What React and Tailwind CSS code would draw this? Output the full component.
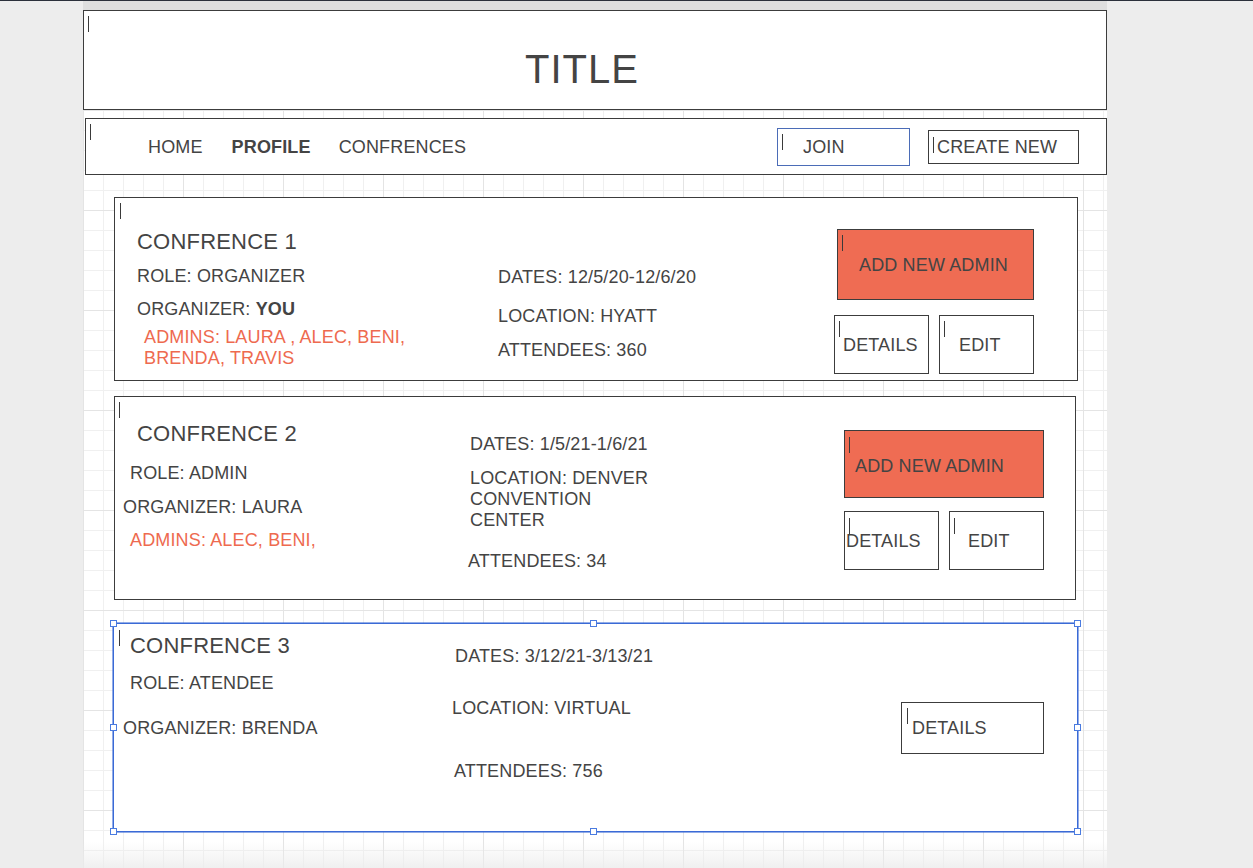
const Cursor = ({ className = "" }) => (
  <span className={`absolute w-px h-4 bg-[#3a3a3a] ${className}`} />
);

const Handle = ({ className = "" }) => (
  <span className={`absolute w-[7px] h-[7px] bg-white border border-[#4a7be0] ${className}`} />
);

const OutlineBox = ({ className = "", cursor = "left-[4px] top-[5px]", children }) => (
  <div className={`relative flex items-center border border-[#3c3c3c] text-[18px] leading-[18px] tracking-[0.15px] ${className}`}>
    <Cursor className={cursor} />
    {children}
  </div>
);

const Line = ({ className = "", children }) => (
  <p className={`text-[18px] leading-[18px] tracking-[0.15px] whitespace-nowrap ${className}`}>{children}</p>
);

const Heading = ({ className = "", children }) => (
  <h2 className={`text-[22px] leading-[22px] tracking-[0.2px] whitespace-nowrap ${className}`}>{children}</h2>
);

export default function App() {
  return (
    <div className="relative h-[868px] w-full overflow-hidden bg-[#ededed] font-['Liberation_Sans',Arial,sans-serif] text-[#444]">
      <div className="h-px bg-[#2b303b]" />
      <div className="ml-[83px] w-[1024px]">
        <div className="h-[9px] bg-[#dedede]" />

        {/* canvas */}
        <div className="relative h-[858px] bg-white [background-image:linear-gradient(to_right,#e4e4e4_1px,transparent_1px),linear-gradient(to_bottom,#e4e4e4_1px,transparent_1px),linear-gradient(to_right,#f0f0f0_1px,transparent_1px),linear-gradient(to_bottom,#f0f0f0_1px,transparent_1px)] [background-size:100px_100px,100px_100px,20px_20px,20px_20px]">
          {/* title */}
          <div className="relative h-[100px] border border-[#3c3c3c] bg-white">
            <Cursor className="left-[4px] top-[5px]" />
            <div className="pl-[441px] pt-[38px] text-[40px] leading-[40px] tracking-[1px]">TITLE</div>
          </div>

          {/* nav */}
          <div className="relative mt-[8px] ml-[2px] flex h-[57px] items-center border border-[#3c3c3c] bg-white pl-[62px] pr-[27px] text-[18px] leading-[18px] tracking-[0.15px]">
            <Cursor className="left-[4px] top-[5px]" />
            <span>HOME</span>
            <span className="ml-[29px] font-bold">PROFILE</span>
            <span className="ml-[28px]">CONFRENCES</span>
            <div className="relative ml-auto flex h-[38px] w-[133px] items-center border border-[#4b6cb7] pl-[25px]">
              <Cursor className="left-[4px] top-[5px]" />
              JOIN
            </div>
            <OutlineBox className="ml-[18px] h-[34px] w-[151px] pl-[8px]" cursor="left-[4px] top-[6px]">
              CREATE NEW
            </OutlineBox>
          </div>

          {/* conference 1 */}
          <div className="relative mt-[22px] ml-[31px] grid h-[184px] w-[964px] grid-cols-[383px_336px_200px] border border-[#3c3c3c] bg-white">
            <Cursor className="left-[5px] top-[5px]" />
            <div className="pl-[22px] pt-[33px]">
              <Heading>CONFRENCE 1</Heading>
              <Line className="mt-[14px]">ROLE: ORGANIZER</Line>
              <Line className="mt-[15px]">
                ORGANIZER: <b>YOU</b>
              </Line>
              <p className="mt-[9px] ml-[7px] text-[18px] leading-[21px] tracking-[0.15px] text-[#ee6a4f] whitespace-nowrap">
                ADMINS: LAURA , ALEC, BENI,
                <br />
                BRENDA, TRAVIS
              </p>
            </div>
            <div className="pt-[70px]">
              <Line>DATES: 12/5/20-12/6/20</Line>
              <Line className="mt-[21px]">LOCATION: HYATT</Line>
              <Line className="mt-[16px]">ATTENDEES: 360</Line>
            </div>
            <div className="pt-[31px]">
              <OutlineBox className="ml-[3px] h-[71px] w-[197px] bg-[#ef6c53] pl-[21px]" cursor="left-[4px] top-[5px]">
                ADD NEW ADMIN
              </OutlineBox>
              <div className="mt-[15px] flex gap-[10px]">
                <OutlineBox className="h-[59px] w-[95px] pl-[8px]" cursor="left-[4px] top-[5px]">
                  DETAILS
                </OutlineBox>
                <OutlineBox className="h-[59px] w-[95px] pl-[19px]" cursor="left-[4px] top-[5px]">
                  EDIT
                </OutlineBox>
              </div>
            </div>
          </div>

          {/* conference 2 */}
          <div className="relative mt-[15px] ml-[31px] grid h-[204px] w-[962px] grid-cols-[353px_376px_200px] border border-[#3c3c3c] bg-white">
            <Cursor className="left-[4px] top-[5px]" />
            <div className="pl-[8px] pt-[26px]">
              <Heading className="ml-[14px]">CONFRENCE 2</Heading>
              <Line className="mt-[19px] ml-[7px]">ROLE: ADMIN</Line>
              <Line className="mt-[16px]">ORGANIZER: LAURA</Line>
              <Line className="mt-[15px] ml-[7px] text-[#ee6a4f]">ADMINS: ALEC, BENI,</Line>
            </div>
            <div className="pt-[38px]">
              <Line className="ml-[2px]">DATES: 1/5/21-1/6/21</Line>
              <p className="mt-[15px] ml-[2px] text-[18px] leading-[21px] tracking-[0.15px] whitespace-nowrap">
                LOCATION: DENVER
                <br />
                CONVENTION
                <br />
                CENTER
              </p>
              <Line className="mt-[21px]">ATTENDEES: 34</Line>
            </div>
            <div className="pt-[33px]">
              <OutlineBox className="h-[68px] w-[200px] bg-[#ef6c53] pl-[10px] pt-[3px]" cursor="left-[4px] top-[6px]">
                ADD NEW ADMIN
              </OutlineBox>
              <div className="mt-[13px] flex gap-[10px]">
                <OutlineBox className="h-[59px] w-[95px] pl-[1px]" cursor="left-[4px] top-[6px]">
                  DETAILS
                </OutlineBox>
                <OutlineBox className="h-[59px] w-[95px] pl-[18px]" cursor="left-[4px] top-[6px]">
                  EDIT
                </OutlineBox>
              </div>
            </div>
          </div>

          {/* conference 3 (selected) */}
          <div className="relative mt-[23px] ml-[30px] grid h-[209px] w-[965px] grid-cols-[338px_449px_143px] border border-[#3a6ad6] bg-white shadow-[0_0_0_1px_rgba(58,106,214,0.55)]">
            <Cursor className="left-[5px] top-[6px]" />
            <Handle className="-left-[4px] -top-[4px]" />
            <Handle className="left-[476px] -top-[4px]" />
            <Handle className="-right-[4px] -top-[4px]" />
            <Handle className="-left-[4px] top-[100px]" />
            <Handle className="-right-[4px] top-[100px]" />
            <Handle className="-left-[4px] -bottom-[4px]" />
            <Handle className="left-[476px] -bottom-[4px]" />
            <Handle className="-right-[4px] -bottom-[4px]" />
            <div className="pl-[9px] pt-[11px]">
              <Heading className="ml-[7px]">CONFRENCE 3</Heading>
              <Line className="mt-[17px] ml-[7px]">ROLE: ATENDEE</Line>
              <Line className="mt-[27px]">ORGANIZER: BRENDA</Line>
            </div>
            <div className="pt-[23px]">
              <Line className="ml-[3px]">DATES: 3/12/21-3/13/21</Line>
              <Line className="mt-[34px]">LOCATION: VIRTUAL</Line>
              <Line className="mt-[45px] ml-[2px]">ATTENDEES: 756</Line>
            </div>
            <div className="pt-[78px]">
              <OutlineBox className="h-[52px] w-[143px] pl-[10px]" cursor="left-[5px] top-[5px]">
                DETAILS
              </OutlineBox>
            </div>
          </div>

          <div className="pointer-events-none absolute inset-x-0 bottom-0 h-[26px] bg-linear-to-b from-transparent to-[#ececec]/80" />
        </div>
      </div>
    </div>
  );
}
